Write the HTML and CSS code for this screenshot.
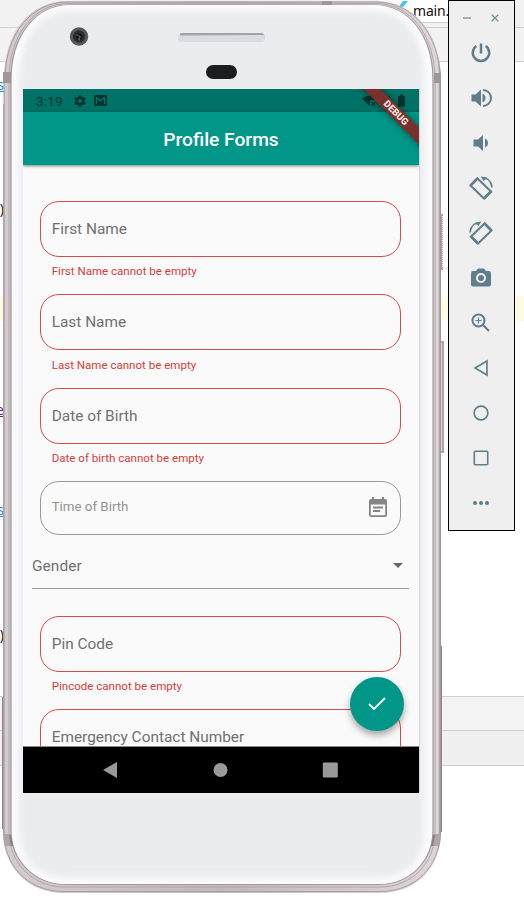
FILE: index.html
```html
<!DOCTYPE html>
<html lang="en">
<head>
<meta charset="utf-8">
<title>Profile Forms</title>
<link rel="stylesheet" href="styles.css">
</head>
<body>
<div class="desktop">
  <div class="editor">
    <div class="tabs"><div class="tab"><svg width="14" height="12" viewBox="0 0 14 12"><path d="M1 12 9 1h5L5 12z" fill="#40c4ff"/></svg><span>main.</span></div></div>
    <div class="crumbs"></div>
    <div class="code"><span class="ln blue">s</span><span class="ln paren">)</span><span class="current"></span><span class="ln purple">e</span><span class="ln blue second">s</span><span class="ln paren last">)</span></div>
    <div class="tools"></div>
    <div class="status"></div>
  </div>

  <div class="phone">
    <svg class="frame" width="446" height="902" viewBox="0 0 446 902">
      <defs>
        <linearGradient id="metal" x1="0" x2="1" y1="0" y2="0"><stop offset="0" stop-color="#a79da1"/><stop offset=".005" stop-color="#d4cbce"/><stop offset=".5" stop-color="#c3b9bd"/><stop offset=".993" stop-color="#ded5d8"/><stop offset="1" stop-color="#8b8186"/></linearGradient>
        <linearGradient id="face" x1="0" x2="1" y1="0" y2="0"><stop offset="0" stop-color="#f6f6f8"/><stop offset=".012" stop-color="#eff0f3"/><stop offset=".04" stop-color="#ebecee"/><stop offset=".96" stop-color="#ebecee"/><stop offset=".985" stop-color="#eff0f3"/><stop offset="1" stop-color="#f6f6f8"/></linearGradient>
        <filter id="soft" x="-5%" y="-5%" width="110%" height="110%"><feGaussianBlur stdDeviation="3"/></filter>
        <clipPath id="facearea"><path d="M12 80C12 35 36 5 70 5H374C409 5 432 36 432 80V830C432 861 410 884 378 884H66C35 884 12 861 12 830Z"/></clipPath>
      </defs>
      <path d="M440 214h3v56h-3zM440 341h4v112h-4z" fill="#aaa5a7"/>
      <path d="M442.5 216v52" stroke="#fff" stroke-dasharray="1 1"/>
      <path d="M441.5 343v108" stroke="#dedbdc"/>
      <path d="M2 697h3v132H2zM439 646h3v186h-3z" fill="#8e8689"/>
      <path d="M4 80C4 33 29 1 68 1H376C414 1 441 34 441 80V832C441 867 417 893 380 893H64C28 893 3 867 3 832V104h1Z" fill="url(#metal)"/>
      <path d="M5 80C5 34 31 2 68 2H376C413 2 440 34 440 80V832C440 866 416 891.500 380 891.500H64C28 891.500 4 866 4 832V80" fill="none" stroke="#a99fa3" stroke-width="1"/>
      <path d="M9 80C9 35 34 3.500 68 3.500H376C411 3.500 435 36 435 80V832C435 863 412 887 380 887H64C33 887 9 863 9 832Z" fill="none" stroke="#afa7aa"/>
      <path d="M11 80C11 35 36 5 70 5H374C409 5 433 36 433 80V830C433 861 410 884.500 378 884.500H66C35 884.500 11 861 11 830Z" fill="url(#face)" stroke="#a09a9d" stroke-width="1.200"/>
      <g clip-path="url(#facearea)"><path d="M12 80C12 35 36 5 70 5H374C409 5 432 36 432 80V830C432 861 410 884 378 884H66C35 884 12 861 12 830Z" fill="none" stroke="#fbfbfd" stroke-width="13" filter="url(#soft)"/></g>
      <path d="M3 72h8v11H3zM434 73h7v10h-7zM322 1h10v4h-10z" fill="#a0969a"/>
      <path d="M3.500 834H11l2 12H5zM433 834h7.500l-2 12H431z" fill="#b0a6aa"/>
      <path d="M9 835h2l2 11h-2zM433 835h2l-2 11h-2z" fill="#887f83"/>
      <circle cx="79" cy="36.500" r="9.200" fill="#555659"/><circle cx="79" cy="36.500" r="6" fill="#292a31"/><circle cx="79" cy="36.500" r="3" fill="#111216"/><path d="M78 36h2v2h-1v2h1" stroke="#77723b" fill="none"/><circle cx="77" cy="35" r="1" fill="#4a4b63"/>
      <rect x="178" y="33" width="87" height="9" rx="4" fill="#dadce0"/><path d="M180 35.500V34q0-1 2-1h79q3 0 3 2z" fill="#9fa3ad"/>
      <rect x="206" y="65" width="31" height="14" rx="7" fill="#1b1d20"/>
    </svg>

    <div class="screen">
      <header class="sysbar">
        <span class="clock">3:19</span>
        <svg class="gear" width="14" height="14" viewBox="0 0 24 24"><path fill-rule="evenodd" d="M19.400 13a8 8 0 0 0 0-2l2.100-1.600a.5.5 0 0 0 .1-.7l-2-3.400a.5.5 0 0 0-.6-.2l-2.500 1a7.600 7.600 0 0 0-1.700-1l-.4-2.700a.5.5 0 0 0-.5-.4h-4a.5.5 0 0 0-.5.400l-.4 2.700a7.600 7.600 0 0 0-1.700 1L4.800 5a.5.5 0 0 0-.6.200l-2 3.500a.5.5 0 0 0 .1.700L4.500 11a8 8 0 0 0 0 2l-2.200 1.600a.5.5 0 0 0-.1.700l2 3.400c.1.200.4.300.6.200l2.500-1a7.600 7.600 0 0 0 1.700 1l.4 2.700c0 .2.200.4.500.4h4c.2 0 .5-.2.500-.4l.4-2.700a7.600 7.600 0 0 0 1.700-1l2.500 1c.2.100.5 0 .6-.2l2-3.400a.5.5 0 0 0-.1-.7zM12 15.500a3.500 3.500 0 1 1 0-7 3.500 3.500 0 0 1 0 7z"/></svg>
        <svg width="13" height="11" viewBox="0 0 13 11"><path fill-rule="evenodd" d="M1 0h11q1 0 1 1v9q0 1-1 1H1q-1 0-1-1V1q0-1 1-1zm.8 1.800v7.500H3V4l3.500 2.700L10 4v5.300h1.200V1.800h-.8L6.500 4.800 2.600 1.800z"/></svg>
        <svg class="radio" width="45" height="14" viewBox="0 0 45 14"><path d="M0 4.500Q7-1 14 4.500L12.500 6H8v5l-.7 1z"/><path d="m9.500 8 3.500 3.500M13 8l-3.500 3.500" stroke="#003530" stroke-width="1.200"/><path d="M17 12.500 28 1.500v11zM36.500 2H38V.5h3V2h1.500q.5 0 .5.500v10H36v-10q0-.5.5-.5z"/></svg>
      </header>
      <div class="appbar">Profile Forms</div>
      <div class="form">
        <div class="field bad">First Name</div><p class="error">First Name cannot be empty</p>
        <div class="field bad">Last Name</div><p class="error">Last Name cannot be empty</p>
        <div class="field bad">Date of Birth</div><p class="error">Date of birth cannot be empty</p>
        <div class="field time"><span>Time of Birth</span><svg width="18" height="20" viewBox="0 0 18 20"><path fill-rule="evenodd" d="M3 0h2v2h8V0h2v2h1q2 0 2 2v14q0 2-2 2H2q-2 0-2-2V4q0-2 2-2h1zM1.800 7.500v10.700h14.400V7.500zM4 9.500h10v2H4zm0 3.500h7v2H4z"/></svg></div>
        <div class="gender"><span>Gender</span><svg width="10" height="5" viewBox="0 0 10 5"><path d="M0 0h10L5 5z"/></svg></div>
        <div class="field bad">Pin Code</div><p class="error">Pincode cannot be empty</p>
        <div class="field bad">Emergency Contact Number</div>
      </div>
      <nav class="navbar">
        <svg width="16" height="18" viewBox="0 0 16 18"><path d="M1 9 15 1v16z"/></svg>
        <svg width="16" height="18" viewBox="0 0 16 18"><circle cx="8.500" cy="9" r="7"/></svg>
        <svg width="16" height="18" viewBox="0 0 16 18"><rect x=".8" y="1.500" width="15" height="15" rx="1"/></svg>
      </nav>
      <button class="fab" aria-label="Submit"><svg width="18" height="14" viewBox="0 0 18 14"><path d="m1 7 5 5L17 1" fill="none" stroke="#fff" stroke-width="1.900"/></svg></button>
      <div class="ribbon">DEBUG</div>
    </div>
  </div>

  <aside class="panel">
    <div class="window-buttons"><svg width="8" height="8" viewBox="0 0 8 8"><path d="M0 4h8"/></svg><svg width="8" height="8" viewBox="0 0 8 8"><path d="m.7.700 6.600 6.600m0-6.600L.7 7.300"/></svg></div>
    <svg viewBox="0 0 24 24"><path class="line thick" d="M12 2.500v10M7.300 5A8.200 8.200 0 1 0 16.700 5"/></svg>
    <svg viewBox="0 0 24 24"><path d="M2.500 8.500h4L12 3.500v17l-5.500-5h-4zM13.500 7.500q3 1.500 3 4.500t-3 4.500z"/><path class="line" d="M14 4a8 8 0 0 1 0 16"/></svg>
    <svg viewBox="0 0 24 24"><path d="M4.500 8.500h4.500l5-4.500v16l-5-4.500H4.500zM16 7.500q3 1.500 3 4.500t-3 4.500z"/></svg>
    <svg viewBox="0 0 24 24"><g id="rotate"><path class="line" d="M8.500 2.500 22 15.500 15 22.500 1.500 9.500z"/><path class="line thick" d="m9 2-7.500 7.500M22.500 15 15 22.500"/><path class="line thin" d="M12.500 1.500Q22 1.500 23 11.500"/><path d="m12 .5 6.500 1.500-4 3z"/></g></svg>
    <svg class="flip" viewBox="0 0 24 24"><use href="#rotate"/></svg>
    <svg viewBox="0 0 24 24"><path fill-rule="evenodd" d="M9 2.500h6l2 2.500h3q2 0 2 2v11.500q0 2-2 2H4q-2 0-2-2V7q0-2 2-2h3zM12 7a5 5 0 1 0 0 10 5 5 0 0 0 0-10zm0 2a3 3 0 1 1 0 6 3 3 0 0 1 0-6z"/></svg>
    <svg viewBox="0 0 24 24"><circle class="line" cx="9.500" cy="9.500" r="6"/><path class="line" d="m14 14 6 6"/><path class="line fine" d="M6.500 9.500h6M9.500 6.500v6"/></svg>
    <svg viewBox="0 0 24 24"><path class="line thin" d="M6 12 18 5v14z"/></svg>
    <svg viewBox="0 0 24 24"><circle class="line thin" cx="12" cy="12" r="6.900"/></svg>
    <svg viewBox="0 0 24 24"><rect class="line thin" x="5.300" y="5.300" width="13.400" height="13.400" rx="1"/></svg>
    <svg viewBox="0 0 24 24"><circle cx="6" cy="12" r="2"/><circle cx="12" cy="12" r="2"/><circle cx="18" cy="12" r="2"/></svg>
  </aside>
</div>
</body>
</html>
```
FILE: styles.css
```css
* { box-sizing: border-box; }
body { margin: 0; font-family: Roboto, sans-serif; }
.desktop { position: relative; width: 524px; height: 902px; overflow: hidden; background: #fff; }
.editor { display: flex; flex-direction: column; height: 902px; }
.tabs { height: 28px; background: #f2f2f2; border-bottom: 1px solid #cfcfcf; padding-left: 379px; flex: none; }
.tab { width: 135px; height: 23px; background: #fff; border-bottom: 1px solid #cfcfcf; display: flex; align-items: flex-start; padding-left: 15px; font: 14px/21px "Noto Sans", sans-serif; color: #111; }
.tab span { margin-left: 5px; letter-spacing: -.2px; }
.crumbs { height: 34px; flex: none; background: #f2f2f2; border-bottom: 1px solid #cfcfcf; }
.code { height: 634px; flex: none; display: flex; flex-direction: column; }
.ln { font: 14px/20px "Noto Sans", sans-serif; width: 4px; height: 20px; overflow: hidden; display: flex; justify-content: flex-end; margin-top: 13px; flex: none; }
.blue { color: #1e88e5; text-decoration: underline; }
.paren { color: #14202c; margin-top: 104px; }
.current { height: 25px; margin-top: 77px; background: #fffae3; flex: none; }
.purple { color: #751b87; margin-top: 79px; text-decoration: underline; }
.second { margin-top: 80px; }
.last { margin-top: 105px; }
.tools { height: 35px; flex: none; background: #f3f3f3; border: solid #cfcfcf; border-width: 1px 0; }
.status { height: 35px; flex: none; background: #f0f0f0; border-bottom: 1px solid #cfcfcf; }

.phone { position: absolute; left: 0; top: 0; width: 446px; height: 902px; padding: 89px 0 0 23px; }
.frame { position: absolute; left: 0; top: 0; }
.screen { position: relative; width: 396px; height: 704px; display: flex; flex-direction: column; overflow: hidden; background: #fafafa; box-shadow: 1px 0 #d3d4d6; }
.sysbar { height: 23px; flex: none; background: #007166; fill: #00352f; color: #00352f; display: flex; align-items: center; padding: 0 12px 0 13px; }
.clock { font-size: 13.500px; letter-spacing: .15px; width: 37px; }
.gear { margin-right: 7px; }
.radio { margin-left: auto; }
.appbar { height: 53px; flex: none; background: #009688; color: #fff; font-size: 19.200px; font-weight: 500; text-align: center; line-height: 55px; box-shadow: 0 1px 3px rgba(0,0,0,.5); z-index: 1; }
.form { height: 581px; flex: none; overflow: hidden; padding: 35.500px 10px 0 9px; }
.field { height: 56px; border: 1px solid #999; border-radius: 19px; margin: 0 8px; padding: 0 10.700px; display: flex; align-items: center; font-size: 15.400px; letter-spacing: 0; color: #707070; }
.bad { border-color: #db4a4a; }
.error { margin: 0; height: 37.500px; padding: 7.500px 19.700px 0; font-size: 11.550px; line-height: 15px; color: #d63c3c; }
.time { height: 54px; font-size: 13.300px; padding-bottom: 3px; margin-top: -.5px; color: #929292; }
.time svg { margin: 1px 2px 0 auto; fill: #858585; }
.gender { height: 54px; border-bottom: 1px solid #999; display: flex; align-items: center; justify-content: space-between; padding: 9px 6px 0 0; margin-bottom: 27px; font-size: 15.400px; letter-spacing: .1px; color: #707070; }
.gender svg { fill: #666; }
.navbar { height: 47px; flex: none; background: #000; border-top: 1px solid #888; display: flex; align-items: center; justify-content: space-between; padding: 0 81px 0 79px; fill: #999; }
.fab { position: absolute; left: 326.500px; top: 588px; width: 54px; height: 54px; border: 0; padding: 0; border-radius: 50%; background: #009688; display: flex; align-items: center; justify-content: center; box-shadow: 0 4px 7px rgba(0,0,0,.35); }
.ribbon { position: absolute; z-index: 2; left: 322.500px; top: 17.500px; width: 100px; height: 12px; transform: rotate(45deg); background: #7a312d; box-shadow: 0 0 6px rgba(0,0,0,.5); color: #eddedd; font-size: 9.600px; line-height: 12px; font-weight: 900; text-align: center; }

.panel { position: absolute; left: 448px; top: 0; width: 67px; height: 531px; border: 1px solid #000; background: #efefef; display: flex; flex-direction: column; align-items: center; gap: 21px; padding-top: 13px; fill: #607d8b; }
.panel > svg { width: 24px; height: 24px; flex: none; margin-right: 1px; }
.window-buttons { display: flex; gap: 20px; height: 8px; margin: 0 2px -2px 0; }
.window-buttons path { stroke: #78909c; stroke-width: 1.300; }
.panel .line { fill: none; stroke: #607d8b; stroke-width: 2; }
.panel .thick { stroke-width: 2.500; }
.panel .thin { stroke-width: 1.600; }
.panel .fine { stroke-width: 1.200; }
.flip { transform: scaleX(-1); }
```
